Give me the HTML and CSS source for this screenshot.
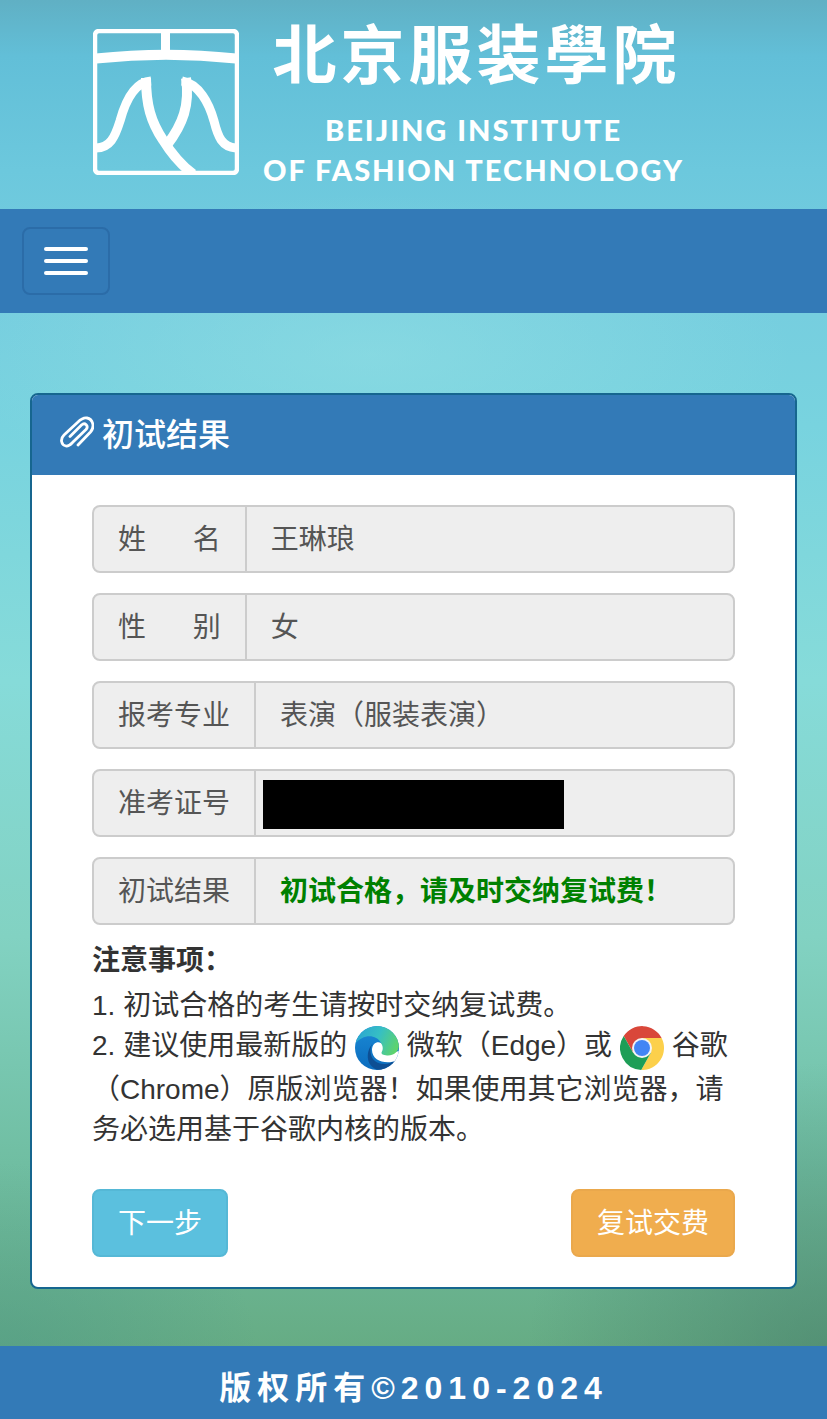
FILE: index.html
```
<!DOCTYPE html>
<html lang="zh-CN">
<head>
  <meta charset="utf-8">
  <meta name="viewport" content="width=device-width, initial-scale=1">
  <title>初试结果</title>
  <link rel="stylesheet" href="styles.css">
</head>
<body>
<header class="banner">
  <svg class="banner-mark" viewBox="0 0 146 146" fill="none" stroke="#fff" aria-hidden="true">
    <rect x="2" y="2" width="142" height="142" rx="4" stroke-width="4.5"/>
    <path d="M72.500 3V26" stroke-width="9"/>
    <path d="M3 29.500Q73 22 143 29.500" stroke-width="10"/>
    <path d="M3 119C17 119 22 108 27 92C33 70 42 53 58 52" stroke-width="9"/>
    <path d="M53 49C53 76 58 93 70 111C78 124 88 136 100 145" stroke-width="10"/>
    <path d="M143 119C129 118 125 108 121 92C116 74 106 55 89 52" stroke-width="9"/>
    <path d="M93 49C97 76 90 95 74 116" stroke-width="10"/>
  </svg>
  <div class="banner-name">
    <div class="banner-cn">北京服装學院</div>
    <div class="banner-en">BEIJING INSTITUTE<br>OF FASHION TECHNOLOGY</div>
  </div>
</header>

<nav class="navbar">
  <button class="navbar-toggle" type="button" aria-label="菜单">
    <span class="icon-bar"></span>
    <span class="icon-bar"></span>
    <span class="icon-bar"></span>
  </button>
</nav>

<main class="container">
  <section class="panel">
    <h1 class="panel-heading">
      <svg class="icon-clip" viewBox="0 0 34 32" fill="none" stroke="#fff" stroke-width="2.800" stroke-linecap="round" stroke-linejoin="round" aria-hidden="true">
        <path d="M18 29L30.500 16C35 11 33 3 27 2C24 1.500 21 3 18 6L4 19C0 23 1 29 6 30C9 30.500 11 28 13 26L26 13.500C29 10 25 6 21.500 9L10 20.500"/>
      </svg>
      初试结果
    </h1>
    <div class="panel-body">
      <div class="input-group">
        <label class="input-addon" for="xm">姓&nbsp;&nbsp;&nbsp;&nbsp;&nbsp;&nbsp;名</label>
        <input class="form-control" id="xm" value="王琳琅" readonly>
      </div>
      <div class="input-group">
        <label class="input-addon" for="xb">性&nbsp;&nbsp;&nbsp;&nbsp;&nbsp;&nbsp;别</label>
        <input class="form-control" id="xb" value="女" readonly>
      </div>
      <div class="input-group">
        <label class="input-addon" for="zy">报考专业</label>
        <input class="form-control" id="zy" value="表演（服装表演）" readonly>
      </div>
      <div class="input-group">
        <label class="input-addon" for="zkzh">准考证号</label>
        <input class="form-control" id="zkzh" value="" readonly>
        <span class="mask"></span>
      </div>
      <div class="input-group">
        <label class="input-addon" for="jg">初试结果</label>
        <input class="form-control result" id="jg" value="初试合格，请及时交纳复试费！" readonly>
      </div>

      <div class="notes">
        <h2 class="notes-title">注意事项：</h2>
        <p>1. 初试合格的考生请按时交纳复试费。</p>
        <p>2. 建议使用最新版的
          <svg class="browser" viewBox="0 0 44 44" role="img" aria-label="Edge">
            <defs>
              <linearGradient id="crest" x1="0" y1="0.300" x2="1" y2="0.600">
                <stop offset="0" stop-color="#2aa5d2"/>
                <stop offset="0.500" stop-color="#36bfc4"/>
                <stop offset="1" stop-color="#5fd46a"/>
              </linearGradient>
              <linearGradient id="wave" x1="0" y1="0" x2="0" y2="1">
                <stop offset="0" stop-color="#1b8ad6"/>
                <stop offset="1" stop-color="#0b6cbd"/>
              </linearGradient>
              <clipPath id="disc"><circle cx="22" cy="22" r="22"/></clipPath>
            </defs>
            <g clip-path="url(#disc)">
              <rect width="44" height="44" fill="url(#wave)"/>
              <path d="M18 17C13 23 15 38 29 38C34 38 38 36 44 32L44 44H24C12 42 9 27 18 17Z" fill="#0d4f94"/>
              <path d="M17 24C17 16 25 14 28 19L31 28L44 25L48 28L42 34.500C31 39 17 35 17 24Z" fill="#fff"/>
              <path d="M0 18C3 6 12 0 23 0C36 0 44 9 44 19C44 26 38 30 32 29.500C28 29 26 28 26.500 26.500C28 24 28.500 21 26 17C21 8 8 8 0 18Z" fill="url(#crest)"/>
            </g>
          </svg>
          微软（Edge）或
          <svg class="browser" viewBox="0 0 44 44" role="img" aria-label="Chrome">
            <path d="M3.700 10A22 22 0 0 1 41.600 12H22V22L13.300 27Z" fill="#d9473a"/>
            <path d="M22 12H41.600A22 22 0 0 1 21.200 44L30.700 27L22 22Z" fill="#fcd04b"/>
            <path d="M3.700 10A22 22 0 0 0 21.200 44L30.700 27L22 22L13.300 27Z" fill="#1e9e57"/>
            <circle cx="22" cy="22" r="10" fill="#f4f4f4"/>
            <circle cx="22" cy="22" r="8" fill="#4285f4"/>
          </svg>
          谷歌（Chrome）原版浏览器！如果使用其它浏览器，请务必选用基于谷歌内核的版本。</p>
      </div>

      <div class="actions">
        <button class="btn btn-info" type="button">下一步</button>
        <button class="btn btn-warning" type="button">复试交费</button>
      </div>
    </div>
  </section>
</main>

<footer class="footer">版权所有©2010-2024</footer>
</body>
</html>
```

FILE: styles.css
```
* {
  box-sizing: border-box;
}

body {
  margin: 0;
  min-height: 100vh;
  display: flex;
  flex-direction: column;
  font-family: "Liberation Sans", "Noto Sans CJK SC", sans-serif;
  font-size: 28px;
  line-height: 40px;
  color: #333;
  text-spacing-trim: space-all;
  background:
    radial-gradient(ellipse 300px 300px at 100% 96%, rgba(70, 125, 105, 0.6), transparent),
    radial-gradient(ellipse 260px 200px at 0% 96%, rgba(75, 150, 135, 0.5), transparent),
    radial-gradient(ellipse 420px 160px at 45% 25%, rgba(150, 225, 228, 0.5), transparent),
    linear-gradient(#60b0c4 0, #62bfd8 4%, #6cc8dd 12%, #76cedf 22%, #78d3df 30%, #86dbd9 48%, #82d2c2 66%, #70bea2 82%, #66ac84 95%);
}

.banner {
  display: flex;
  gap: 24px;
  padding: 12px 93px 19px;
}

.banner-mark {
  width: 146px;
  height: 146px;
  margin-top: 17px;
  flex: none;
}

.banner-name {
  color: #fff;
  text-align: center;
  white-space: nowrap;
}

.banner-cn {
  margin-bottom: 22px;
  padding-left: 6px;
  font-family: "Noto Sans CJK SC", sans-serif;
  font-size: 64px;
  font-weight: 700;
  letter-spacing: 4px;
  line-height: 76px;
}

.banner-en {
  font-family: Lato, sans-serif;
  font-size: 29px;
  font-weight: 900;
  letter-spacing: 2px;
  line-height: 40px;
}

.navbar {
  padding: 18px 22px;
  background: #337ab7;
}

.navbar-toggle {
  display: flex;
  flex-direction: column;
  justify-content: center;
  gap: 8px;
  height: 68px;
  padding: 0 20px;
  background: none;
  border: 2px solid #2b6ca8;
  border-radius: 8px;
}

.icon-bar {
  width: 44px;
  height: 4px;
  border-radius: 2px;
  background: #fff;
}

.container {
  flex: 1;
  padding: 80px 30px 57px;
}

.panel {
  border: 2px solid #16668f;
  border-radius: 8px;
  background: #fff;
  overflow: hidden;
}

.panel-heading {
  display: flex;
  align-items: center;
  gap: 8px;
  margin: 0;
  padding: 20px 28px;
  font-size: 32px;
  font-weight: 500;
  color: #fff;
  background: #337ab7;
}

.icon-clip {
  width: 34px;
  height: 32px;
  margin-bottom: 6px;
}

.panel-body {
  padding: 30px 60px;
}

.input-group {
  position: relative;
  display: flex;
  height: 68px;
  margin-bottom: 20px;
  border: 2px solid #ccc;
  border-radius: 8px;
  background: #eee;
  overflow: hidden;
}

.input-addon {
  padding: 13px 24px 11px;
  color: #555;
  border-right: 2px solid #ccc;
  white-space: nowrap;
}

.form-control {
  flex: 1;
  min-width: 0;
  padding: 2px 24px 0;
  border: 0;
  background: none;
  font: inherit;
  color: #555;
  text-spacing-trim: space-all;
}

.result {
  font-weight: 700;
  color: #008000;
}

/* hides the ticket number */
.mask {
  position: absolute;
  top: 9px;
  left: 169px;
  width: 301px;
  height: 49px;
  background: #000;
}

.notes-title {
  margin: -4px 0 5px;
  font-size: 28px;
  font-weight: 700;
}

.notes p {
  margin: 0;
}

.browser {
  width: 44px;
  height: 44px;
  vertical-align: middle;
}

.actions {
  display: flex;
  justify-content: space-between;
  margin-top: 39px;
}

.btn {
  height: 68px;
  padding: 2px 24px 0;
  border: 2px solid;
  border-radius: 8px;
  font: inherit;
  color: #fff;
}

.btn-info {
  background: #5bc0de;
  border-color: #55b8d6;
}

.btn-warning {
  background: #f0ad4e;
  border-color: #eaa84c;
}

.footer {
  padding: 22px 20px 11px;
  background: #337ab7;
  color: #fff;
  font-size: 32px;
  font-weight: 700;
  letter-spacing: 6px;
  text-align: center;
}
```
